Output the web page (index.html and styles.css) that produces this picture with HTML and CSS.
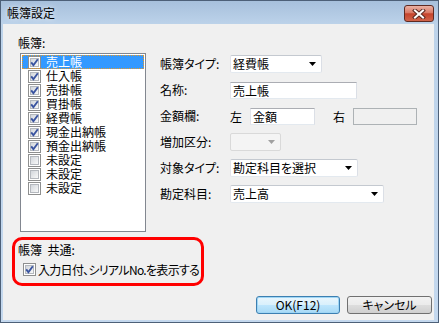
FILE: index.html
```html
<!DOCTYPE html>
<html>
<head>
    <meta charset="utf-8">
    <title>帳簿設定</title>
    <link rel="stylesheet" href="styles.css">
</head>
<body>
    <svg class="defs" width="0" height="0">
        <defs>
            <linearGradient id="chkFill" x1="0" y1="0" x2="1" y2="1">
                <stop offset="0" stop-color="#cfd3d9"/>
                <stop offset="1" stop-color="#fbfbfb"/>
            </linearGradient>
            <symbol id="chk-off" viewBox="0 0 13 13">
                <rect x="0.5" y="0.5" width="12" height="12" fill="#fff" stroke="#8e8f8f"/>
                <rect x="2.5" y="2.5" width="8" height="8" fill="url(#chkFill)" stroke="#b4b8be"/>
            </symbol>
            <symbol id="chk-on" viewBox="0 0 13 13">
                <rect x="0.5" y="0.5" width="12" height="12" fill="#fff" stroke="#8e8f8f"/>
                <rect x="2.5" y="2.5" width="8" height="8" fill="url(#chkFill)" stroke="#b4b8be"/>
                <path d="M3.2 6.4 L5.4 9.2 L9.8 3.2" fill="none" stroke="#3a54a0" stroke-width="1.9"/>
            </symbol>
        </defs>
    </svg>

    <div class="window">
        <div class="titlebar">
            <span class="title">帳簿設定</span>
            <div class="close">
                <svg width="14" height="10" viewBox="0 0 14 10">
                    <path d="M3 1.5 L11 8.5 M11 1.5 L3 8.5" stroke="#5b2a22" stroke-width="4" stroke-linecap="square"/>
                    <path d="M3 1.5 L11 8.5 M11 1.5 L3 8.5" stroke="#fff" stroke-width="2" stroke-linecap="square"/>
                </svg>
            </div>
        </div>

        <div class="client">
            <div class="main">
                <div class="books">
                    <div class="caption">帳簿:</div>
                    <ul class="listbox">
                        <li class="item selected"><svg class="chk"><use href="#chk-on"/></svg><span>売上帳</span></li>
                        <li class="item"><svg class="chk"><use href="#chk-on"/></svg><span>仕入帳</span></li>
                        <li class="item"><svg class="chk"><use href="#chk-on"/></svg><span>売掛帳</span></li>
                        <li class="item"><svg class="chk"><use href="#chk-on"/></svg><span>買掛帳</span></li>
                        <li class="item"><svg class="chk"><use href="#chk-on"/></svg><span>経費帳</span></li>
                        <li class="item"><svg class="chk"><use href="#chk-on"/></svg><span>現金出納帳</span></li>
                        <li class="item"><svg class="chk"><use href="#chk-on"/></svg><span>預金出納帳</span></li>
                        <li class="item"><svg class="chk"><use href="#chk-off"/></svg><span>未設定</span></li>
                        <li class="item"><svg class="chk"><use href="#chk-off"/></svg><span>未設定</span></li>
                        <li class="item"><svg class="chk"><use href="#chk-off"/></svg><span>未設定</span></li>
                    </ul>
                </div>

                <div class="form">
                    <label>帳簿タイプ:</label>
                    <div class="field">
                        <div class="combo w-type"><span class="value">経費帳</span><i class="arrow"></i></div>
                    </div>

                    <label>名称:</label>
                    <div class="field">
                        <div class="textbox w-name">売上帳</div>
                    </div>

                    <label>金額欄:</label>
                    <div class="field">
                        <span class="side">左</span>
                        <div class="textbox w-amount">金額</div>
                        <span class="side right">右</span>
                        <div class="textbox disabled w-amount2"></div>
                    </div>

                    <label>増加区分:</label>
                    <div class="field">
                        <div class="combo disabled w-inc"><span class="value"></span><i class="arrow"></i></div>
                    </div>

                    <label>対象タイプ:</label>
                    <div class="field">
                        <div class="combo w-target"><span class="value">勘定科目を選択</span><i class="arrow"></i></div>
                    </div>

                    <label>勘定科目:</label>
                    <div class="field">
                        <div class="combo w-account"><span class="value">売上高</span><i class="arrow"></i></div>
                    </div>
                </div>
            </div>

            <div class="common">
                <div class="caption">帳簿&nbsp; 共通:</div>
                <div class="check-row">
                    <svg class="chk"><use href="#chk-on"/></svg>
                    <span>入力日付、シリアルNo.を表示する</span>
                </div>
            </div>

            <div class="buttons">
                <button class="btn default">OK(F12)</button>
                <button class="btn">キャンセル</button>
            </div>
        </div>
    </div>
</body>
</html>
```

FILE: styles.css
```css
/* Dialog window */
body {
    margin: 0;
    background: #fff;
    font-family: "Noto Sans CJK JP", "Noto Sans", sans-serif;
    font-size: 12px;
    font-feature-settings: "palt";
    color: #000;
}
.defs {
    position: absolute;
    width: 0;
    height: 0;
}
.window {
    width: 439px;
    height: 323px;
    box-sizing: border-box;
    border: 1px solid #4d6078;
    padding: 0 4px 2px 2px;
    background: linear-gradient(#a7c0dc 0, #bdd3ea 24px, #c4d8ee 100%);
    display: flex;
    flex-direction: column;
}
.titlebar {
    height: 23px;
    margin: 0 -4px 0 -2px;
    display: flex;
    align-items: flex-start;
    justify-content: space-between;
}
.title {
    margin-left: 6px;
    line-height: 24px;
    text-shadow: 0 0 5px rgba(255, 255, 255, 0.9);
}
.close {
    margin: 4px 4px 0 0;
    width: 28px;
    height: 15px;
    border: 1px solid #5e2a22;
    border-radius: 3px;
    background: linear-gradient(#eab1a4 0%, #da7a66 45%, #c5432c 52%, #d0644a 100%);
    display: flex;
    align-items: center;
    justify-content: center;
}
.client {
    flex: 1;
    background: #f0f0f0;
    display: flex;
    flex-direction: column;
}

/* Top part: list + form */
.main {
    display: flex;
    padding-top: 11px;
}
.books {
    margin-left: 15px;
}
.caption {
    line-height: 15px;
}
.listbox {
    list-style: none;
    margin: 3px 0 0 2px;
    padding: 1px;
    width: 126px;
    height: 179px;
    box-sizing: border-box;
    border: 1px solid #828790;
    background: #fff;
}
.item {
    height: 14px;
    display: flex;
    align-items: center;
    padding-left: 6px;
}
.item span {
    margin-left: 5px;
    line-height: 14px;
}
.item.selected {
    background: #3399ff;
    color: #fff;
    outline: 1px dotted #e59a2a;
    outline-offset: -1px;
}
.chk {
    width: 13px;
    height: 13px;
    flex: none;
}

.form {
    margin: 20px 0 0 14px;
    display: grid;
    grid-template-columns: 70px auto;
    grid-auto-rows: 18px;
    row-gap: 8px;
    align-items: center;
}
.form label {
    line-height: 18px;
}
.field {
    display: flex;
    align-items: center;
}
.side {
    width: 12px;
    margin-right: 8px;
}
.side.right {
    margin-left: 18px;
}
.textbox {
    height: 17px;
    box-sizing: border-box;
    border: 1px solid;
    border-color: #abadb3 #dbdfe6 #e3e9ef #e2e3ea;
    background: #fff;
    padding-left: 2px;
    line-height: 15px;
}
.textbox.disabled {
    background: #f0f0f0;
    border-color: #adb2b5;
}
.combo {
    height: 18px;
    box-sizing: border-box;
    border: 1px solid;
    border-color: #c4c9d0 #dbdfe6 #e3e9ef #e2e3ea;
    border-radius: 2px;
    background: #fff;
    display: flex;
    align-items: center;
    padding-left: 2px;
}
.combo .value {
    flex: 1;
    line-height: 16px;
}
.arrow {
    width: 7px;
    height: 4px;
    margin-right: 5px;
    background: #000;
    clip-path: polygon(0 0, 100% 0, 50% 100%);
}
.combo.disabled {
    background: #f4f4f4;
    border-color: #d9d9d9;
}
.combo.disabled .arrow {
    background: #a0a0a0;
}
.w-type { width: 92px; }
.w-name { width: 127px; }
.w-amount { width: 65px; }
.w-amount2 { width: 64px; }
.w-inc { width: 51px; }
.w-target { width: 128px; }
.w-account { width: 154px; }

/* Highlighted common settings group */
.common {
    margin: 5px 0 0 9px;
    width: 192px;
    height: 49px;
    box-sizing: border-box;
    border: 3px solid #ff0000;
    border-radius: 10px;
    padding: 2px 0 0 3px;
}
.check-row {
    margin: 5px 0 0 5px;
    height: 15px;
    display: flex;
    align-items: center;
}
.check-row span {
    margin-left: 2px;
    white-space: nowrap;
    letter-spacing: -0.7px;
}

/* Buttons */
.buttons {
    margin-top: 10px;
    padding-right: 2px;
    display: flex;
    justify-content: flex-end;
    gap: 7px;
}
.btn {
    width: 85px;
    height: 18px;
    padding: 0;
    font-family: inherit;
    font-size: 12px;
    font-feature-settings: "palt";
    line-height: 16px;
    border: 1px solid #707070;
    border-radius: 3px;
    background: linear-gradient(#f2f2f2 0%, #ebebeb 49%, #dddddd 51%, #cfcfcf 100%);
    color: #000;
}
.btn.default {
    width: 84px;
    border-color: #3c7fb1;
    background: linear-gradient(#eaf6fd 0%, #d9f0fc 49%, #bee6fd 51%, #a7d9f5 100%);
    box-shadow: inset 0 0 0 1px #9fd6f5;
}
```
